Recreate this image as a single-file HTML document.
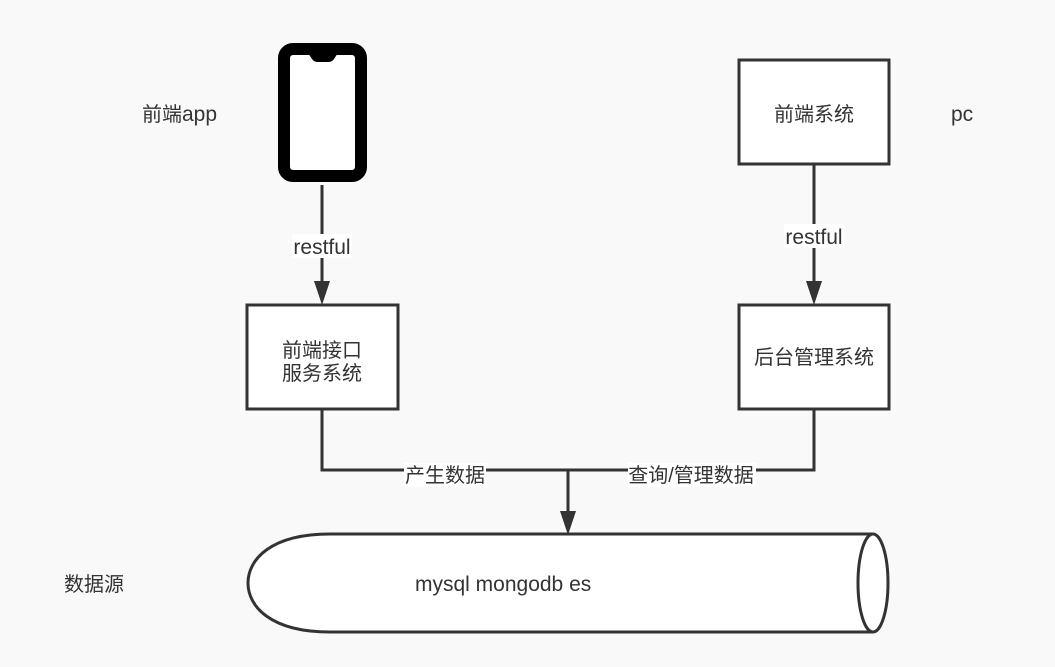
<!DOCTYPE html>
<html><head><meta charset="utf-8"><style>
html,body{margin:0;padding:0;background:#f9f9f9;}
svg{display:block;}
text{font-family:"Liberation Sans","Noto Sans CJK SC",sans-serif;font-size:20px;fill:#333;}
.l{font-size:21px;}
</style></head><body>
<svg width="1055" height="667" viewBox="0 0 1055 667">
<rect width="1055" height="667" fill="#f9f9f9"/>
<!-- phone -->
<rect x="284" y="49" width="77" height="127" rx="9" fill="#fff" stroke="#000" stroke-width="12"/>
<path d="M308 53 L312 59 Q314 62 318 62 L328 62 Q332 62 334 59 L338 53 Z" fill="#000"/>
<!-- lines -->
<g stroke="#333" stroke-width="3" fill="none">
<line x1="322" y1="185" x2="322" y2="285"/>
<line x1="814" y1="164" x2="814" y2="285"/>
<polyline points="322,409 322,470 814,470 814,409"/>
<line x1="568" y1="470" x2="568" y2="515"/>
</g>
<g fill="#333">
<path d="M314 281 L330 281 L322 305 Z"/>
<path d="M806 281 L822 281 L814 305 Z"/>
<path d="M560 511 L576 511 L568 535 Z"/>
</g>
<!-- boxes -->
<g fill="#fff" stroke="#333" stroke-width="3">
<rect x="247" y="305" width="151" height="104"/>
<rect x="739" y="60" width="150" height="104"/>
<rect x="739" y="305" width="150" height="104"/>
<path d="M873 534 L330 534 C270 534 248 560 248 583 C248 606 270 632 330 632 L873 632"/>
<ellipse cx="873" cy="583" rx="15" ry="49"/>
</g>
<!-- label bgs -->
<g fill="#fff">
<rect x="292" y="234" width="60" height="24"/>
<rect x="784" y="224" width="60" height="24"/>
<rect x="404" y="463" width="82" height="24"/>
<rect x="628" y="463" width="128" height="24"/>
</g>
<text class="l" x="322" y="254" text-anchor="middle">restful</text>
<text class="l" x="814" y="244" text-anchor="middle">restful</text>
<text x="445" y="482" text-anchor="middle">产生数据</text>
<text x="691" y="482" text-anchor="middle">查询/管理数据</text>
<text x="322" y="357" text-anchor="middle">前端接口</text>
<text x="322" y="380" text-anchor="middle">服务系统</text>
<text x="814" y="121" text-anchor="middle">前端系统</text>
<text x="814" y="364" text-anchor="middle">后台管理系统</text>
<text x="142" y="121">前端<tspan class="l">app</tspan></text>
<text class="l" x="951" y="121">pc</text>
<text x="64" y="591">数据源</text>
<text class="l" x="415" y="591">mysql mongodb es</text>
</svg>
</body></html>
